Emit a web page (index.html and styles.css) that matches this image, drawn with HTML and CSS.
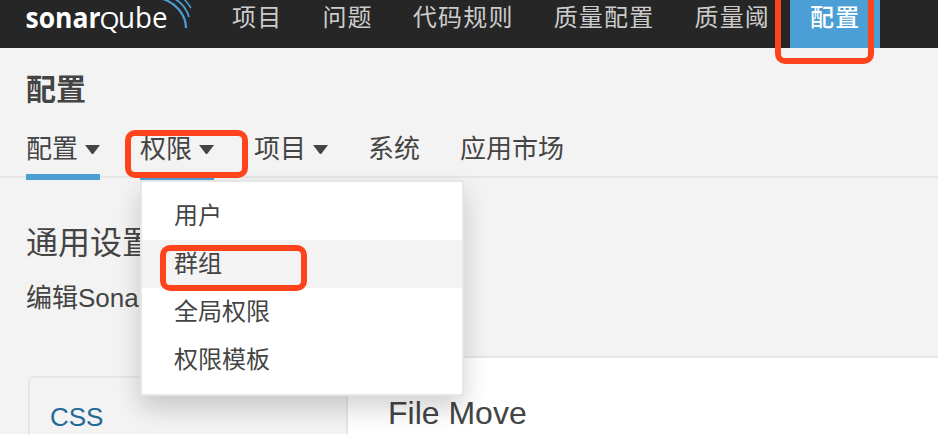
FILE: index.html
```html
<!DOCTYPE html>
<html lang="zh-CN">
<head>
<meta charset="utf-8">
<title>配置</title>
<link rel="stylesheet" href="styles.css">
</head>
<body>
<header class="navbar">
  <svg class="logo" width="186" height="48" viewBox="26 0 186 48" aria-label="sonarqube">
    <text class="logo-bold" x="25.5" y="28" textLength="75" lengthAdjust="spacingAndGlyphs">sonar</text>
    <text class="logo-q" x="99.5" y="28.5" textLength="20" lengthAdjust="spacingAndGlyphs">Q</text>
    <text class="logo-light" x="118" y="28" textLength="49.5" lengthAdjust="spacingAndGlyphs">ube</text>
    <g class="logo-waves">
      <path stroke-width="2.2" d="M163 -1C175 3 186 14 186 28"/>
      <path stroke-width="1.8" d="M175 -1C182 3 187 10 189 17"/>
      <path stroke-width="1.5" d="M184 -1C187 2 189 5 191 8"/>
    </g>
  </svg>
  <nav class="main-nav">
    <a>项目</a><a>问题</a><a>代码规则</a><a>质量配置</a><a>质量阈</a>
    <a class="active">配置<span class="mark mark-top"></span></a>
  </nav>
</header>
<section class="context">
  <h1>配置</h1>
  <nav class="tabs">
    <a class="tab selected">配置<i class="caret"></i></a>
    <div class="tab selected">权限<i class="caret"></i>
      <ul class="menu">
        <li>用户</li>
        <li class="hover">群组<span class="mark mark-group"></span></li>
        <li>全局权限</li>
        <li>权限模板</li>
      </ul>
      <span class="mark mark-tab"></span>
    </div>
    <a class="tab">项目<i class="caret"></i></a>
    <a class="tab">系统</a>
    <a class="tab">应用市场</a>
  </nav>
</section>
<main>
  <h2>通用设置</h2>
  <p>编辑Sonar</p>
  <div class="settings">
    <aside><a>CSS</a></aside>
    <article><h3>File Move</h3></article>
  </div>
</main>
</body>
</html>
```
FILE: styles.css
```css
* { box-sizing: border-box; }
body {
  margin: 0;
  height: 434px;
  overflow: hidden;
  background: #f3f3f3;
  color: #444;
  font-family: "Liberation Sans", "Noto Sans CJK SC", sans-serif;
}
h1, h2, h3, p, ul { margin: 0; padding: 0; font-weight: 400; }
.navbar { display: flex; height: 48px; padding-left: 26px; background: #262626; }
.logo { flex: none; }
.logo text { fill: #fff; }
.logo-bold { font: 700 29px "Open Sans", sans-serif; }
.logo-q { font: 400 24.5px "Open Sans", sans-serif; }
.logo-light { font: 400 30px "Open Sans", sans-serif; }
.logo-waves { fill: none; stroke: #4b9fd5; }
.main-nav { display: flex; }
.main-nav a {
  height: 48px;
  padding: 0 20px;
  font-size: 24px;
  line-height: 35px;
  letter-spacing: 1.2px;
  color: #ccc;
  white-space: nowrap;
}
.main-nav .active { position: relative; background: #4b9fd5; color: #fff; font-weight: 500; }
.mark { position: absolute; border: 6px solid #ff431c; border-radius: 10px; z-index: 5; }
.mark-top { left: -15px; top: -20px; width: 99px; height: 84px; }
.mark-tab { left: -15px; top: 0; width: 123px; height: 48px; }
.mark-group { left: 18px; top: 5px; width: 147px; height: 46px; }
.context { height: 130px; padding: 23px 26px 0; border-bottom: 2px solid #e6e6e6; }
h1 { height: 59px; font-size: 30px; line-height: 38px; font-weight: 700; }
.tabs { display: flex; gap: 40px; height: 50px; }
.tab {
  position: relative;
  display: flex;
  flex: none;
  height: 50px;
  font-size: 26px;
  line-height: 38px;
}
.selected { border-bottom: 6px solid #4b9fd5; }
.caret {
  width: 15px;
  height: 9px;
  margin: 15px 0 0 7px;
  background: #444;
  clip-path: polygon(0 0, 100% 0, 54% 100%, 46% 100%);
}
.menu {
  position: absolute;
  z-index: 3;
  left: 0;
  top: 50px;
  width: 324px;
  height: 216px;
  padding: 10px 0;
  border: 2px solid #e6e6e6;
  background: #fff;
  box-shadow: 0 12px 24px rgba(0, 0, 0, .18);
  list-style: none;
}
.menu li { position: relative; height: 48px; padding-left: 32px; font-size: 24px; line-height: 47px; }
.menu .hover { background: #f3f3f3; }
main { height: 256px; padding: 45px 0 0 26px; overflow: hidden; }
h2 { height: 59px; font-size: 32px; line-height: 40px; }
p { height: 74px; font-size: 26px; line-height: 32px; }
.settings { display: flex; height: 78px; }
aside {
  width: 320px;
  height: 58px;
  margin: 20px 0 0 2px;
  padding: 23px 20px 0;
  border: solid #e6e6e6;
  border-width: 2px 0 0 2px;
  border-radius: 6px 0 0 0;
  font-size: 26px;
  line-height: 32px;
  color: #236a97;
}
article {
  flex: 1;
  height: 78px;
  margin-left: -2px;
  padding: 37px 40px 0;
  border: solid #e6e6e6;
  border-width: 2px 0 0 2px;
  background: #fff;
}
h3 { font-size: 32px; line-height: 36px; }
```
